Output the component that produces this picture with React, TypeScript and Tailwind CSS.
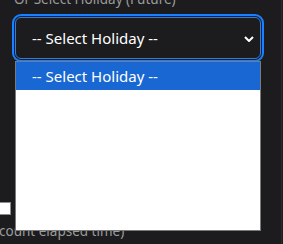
const HolidayPicker = () => {
  return (
    <div className="relative w-[283px] h-[244px] overflow-hidden bg-[#1c1c1e] font-['Segoe_UI','Noto_Sans',sans-serif]">
      <div className="w-[281px] h-full">
        <div className="pl-[14px] -mt-[11px] text-[13.5px] leading-[20px] text-[#9b9b9b]">
          Or Select Holiday (Future)
        </div>

        <div className="ml-[15px] mt-[8px] w-[246px] h-[42px] flex items-center justify-between pl-[16px] pr-[4px] rounded-[6px] border border-[#1a80ff] outline-2 outline-offset-1 outline-[#1a80ff] text-white text-[15px]">
          <span>-- Select Holiday --</span>
          <svg width="10" height="6" viewBox="0 0 10 6" className="mr-[2px] mt-[1px]">
            <polyline points="1,1 5,5 9,1" fill="none" stroke="white" strokeWidth="2" />
          </svg>
        </div>

        <div className="mt-[143px] -ml-[3px] w-[14px] h-[13px] bg-white border border-[#8a8a8a]" />
        <div className="mt-[7px] -ml-[1px] text-[13.5px] leading-[18px] text-[#9b9b9b] whitespace-nowrap">
          count elapsed time)
        </div>
      </div>

      <div className="absolute left-[281px] top-0 w-px h-full bg-[#2c2c2e]" />

      <div className="absolute left-[15px] top-[61px] w-[246px] h-[170px] bg-white border border-[#7a7a7a]">
        <div className="h-[28px] bg-[#1967d2] text-white text-[15px] leading-[28px] pl-[16px]">
          -- Select Holiday --
        </div>
      </div>
    </div>
  );
};

export default function App() {
  return <HolidayPicker />;
}
